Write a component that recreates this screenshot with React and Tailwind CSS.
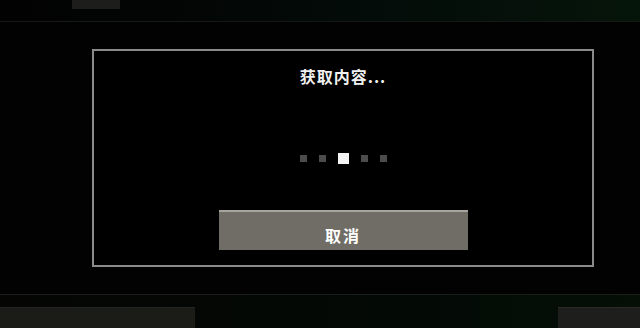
import React from 'react';

const DOTS = [0, 1, 2, 3, 4];
const ACTIVE = 2;

const LoadingDots = () => (
  <div className="flex items-center justify-center gap-[12px] h-[12px]">
    {DOTS.map((i) =>
      i === ACTIVE ? (
        <span key={i} className="block w-[11px] h-[11px] bg-[#f4f4f4]" />
      ) : (
        <span key={i} className="block w-[7px] h-[7px] bg-[#4c4c4c]" />
      )
    )}
  </div>
);

const App = () => {
  return (
    <div
      className="w-[640px] h-[328px] bg-[#020202] overflow-hidden flex flex-col"
      style={{ fontFamily: '"Noto Sans CJK SC", "Noto Sans", sans-serif' }}
    >
      {/* top strip from the scene behind */}
      <div className="h-[22px] shrink-0 border-b border-[#161816] bg-gradient-to-r from-[#020202] via-[#030a08] to-[#06150a]">
        <div className="ml-[72px] w-[48px] h-[9px] bg-[#1d1d1b]" />
      </div>

      <div className="flex-1 flex flex-col">
        <div className="mt-[27px] ml-[92px] w-[502px] h-[218px] border-2 border-[#8a8a8a] bg-black flex flex-col items-center">
          <div className="mt-[15px] text-[16px] leading-[20px] font-bold text-[#f0f0f0] tracking-[1px]">
            获取内容...
          </div>
          <div className="mt-[66px]">
            <LoadingDots />
          </div>
          <button className="mt-[46px] w-[249px] h-[40px] pt-[13px] leading-[20px] bg-[#6f6d65] border-t-2 border-[#a7a59d] text-white text-[16px] font-bold tracking-[2px] flex justify-center items-start">
            取消
          </button>
        </div>
      </div>

      {/* bottom strip from the scene behind */}
      <div className="h-[34px] shrink-0 border-t border-[#1a1d1a] bg-gradient-to-r from-[#050604] via-[#030805] to-[#050f06] flex justify-between items-end">
        <div className="w-[195px] h-[21px] bg-[#1b1b17] border-t border-[#24241f]" />
        <div className="w-[82px] h-[21px] bg-[#1e1f1c] border-t border-[#2a2b27]" />
      </div>
    </div>
  );
};

export default App;
